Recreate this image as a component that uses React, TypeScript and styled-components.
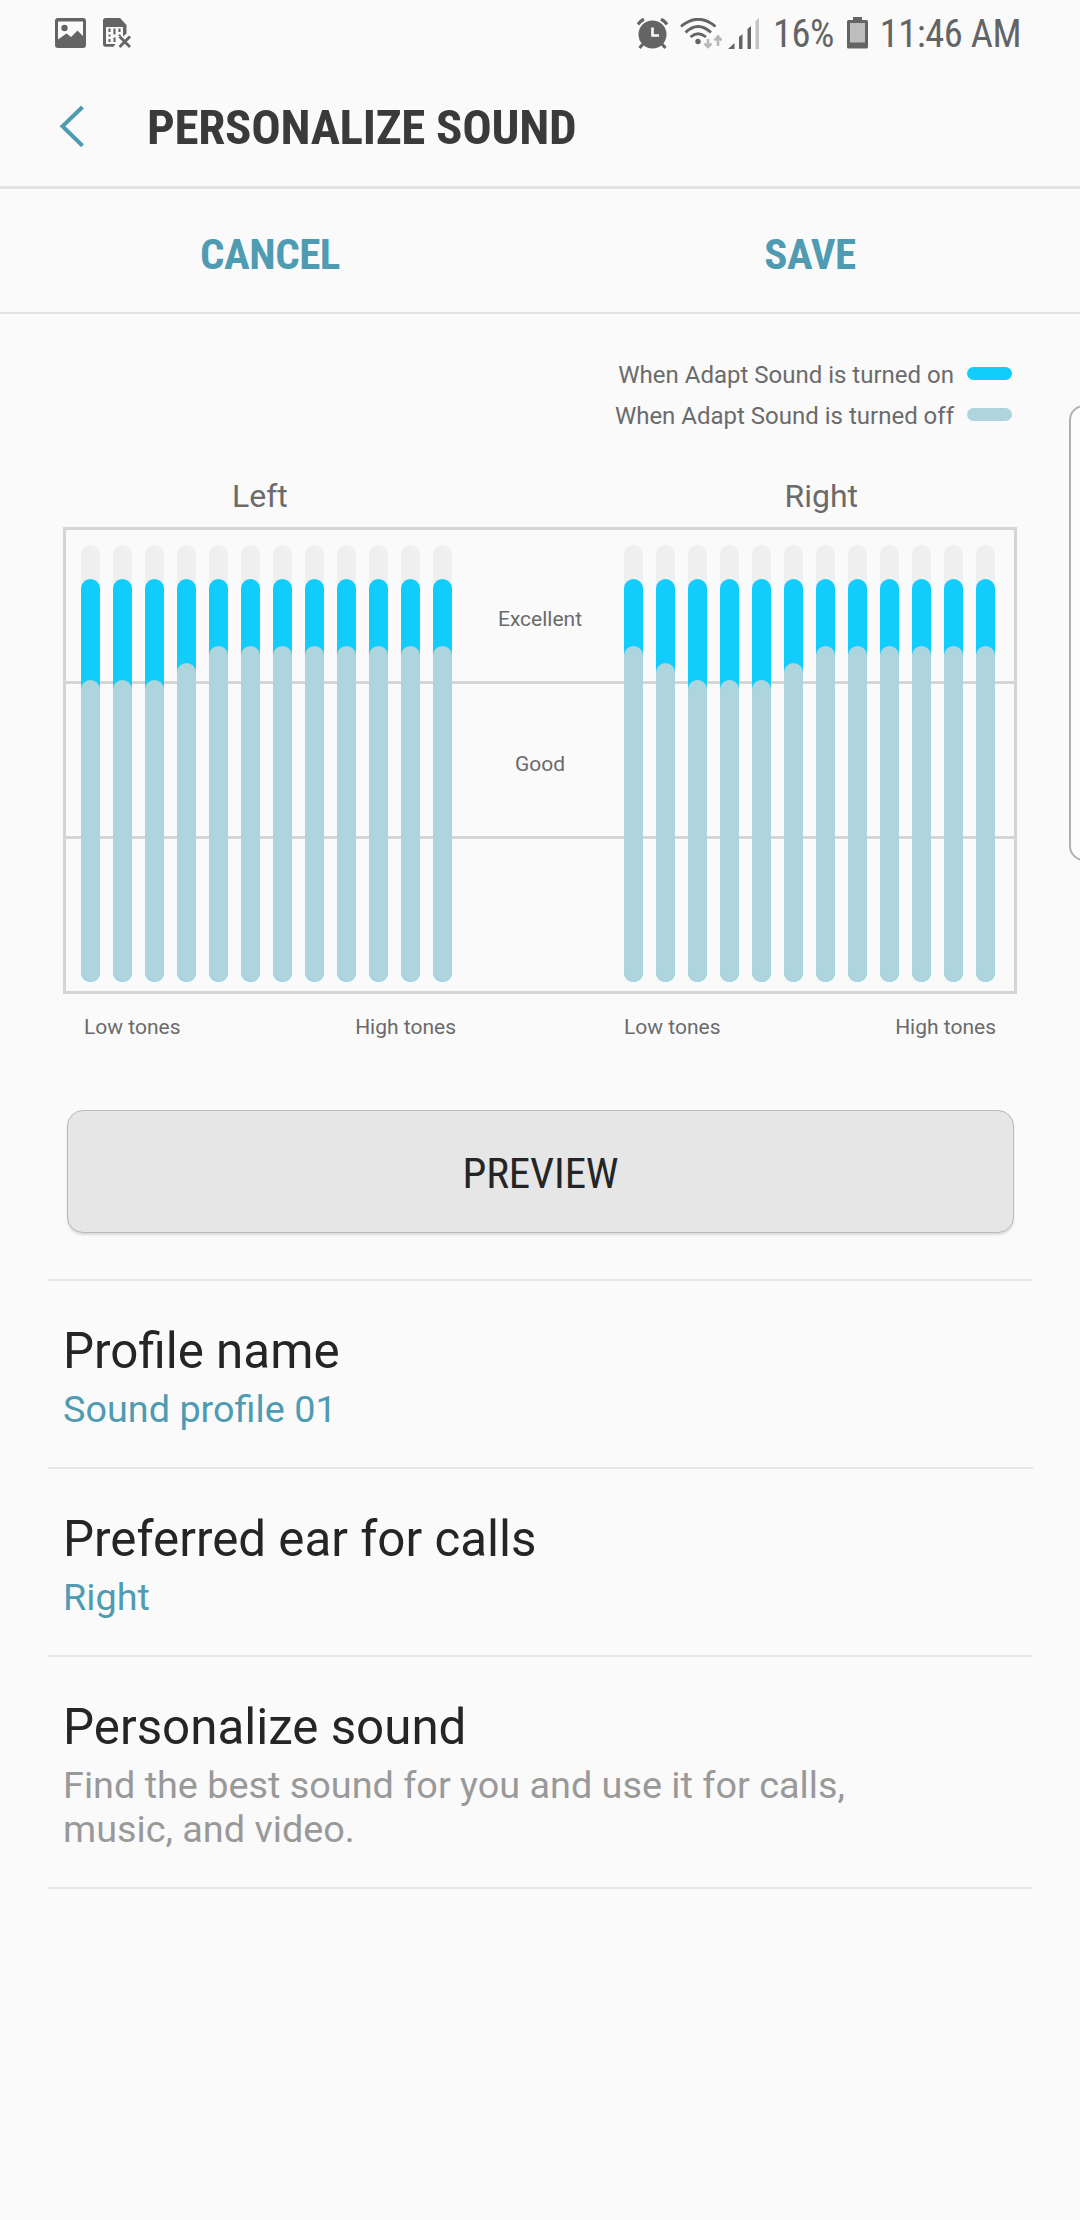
import React from "react";
import styled, { createGlobalStyle } from "styled-components";

const GlobalStyle = createGlobalStyle`
  * { box-sizing: border-box; }
  body { margin: 0; background: #fafafa; }
  button { border: 0; padding: 0; background: none; font: inherit; color: inherit; }
`;

const condensed = `
  font-family: "Roboto Condensed", Roboto, sans-serif;
  font-stretch: 75%;
`;

const Screen = styled.div`
  position: relative;
  width: 1080px;
  height: 2220px;
  overflow: hidden;
  background: #fafafa;
  font-family: Roboto, sans-serif;
`;

const StatusBar = styled.div`
  display: flex;
  align-items: center;
  justify-content: space-between;
  height: 66px;
  padding: 0 59px 0 55px;
  color: #646464;
`;

const StatusGroup = styled.div`
  display: flex;
  align-items: center;
`;

const StatusIcon = styled.svg<{ $gap: number }>`
  display: block;
  flex: none;
  margin-right: ${(p) => p.$gap}px;
`;

const StatusText = styled.span<{ $gap?: number }>`
  ${condensed}
  padding-top: 2px;
  font-size: 38.5px;
  line-height: 64px;
  letter-spacing: -0.5px;
  white-space: nowrap;
  margin-right: ${(p) => p.$gap ?? 0}px;
`;

const Header = styled.header`
  display: flex;
  align-items: center;
  height: 123px;
  padding-left: 58px;
  border-bottom: 3px solid #e3e3e3;
`;

const BackButton = styled.button`
  width: 89px;
  height: 46px;
`;

const BackArrow = styled.svg`
  display: block;
`;

const Title = styled.h1`
  ${condensed}
  margin: 0;
  padding-top: 4px;
  font-size: 49px;
  font-weight: 700;
  line-height: 60px;
  letter-spacing: -0.3px;
  color: #3a3a3a;
  white-space: nowrap;
`;

const ActionBar = styled.div`
  display: grid;
  grid-template-columns: 1fr 1fr;
  height: 125px;
  border-bottom: 2px solid #e3e3e3;
`;

const ActionButton = styled.button`
  ${condensed}
  padding-top: 6px;
  font-size: 43px;
  font-weight: 700;
  letter-spacing: -0.45px;
  color: #4f9bb2;
`;

const Legend = styled.div`
  display: flex;
  flex-direction: column;
  align-items: flex-end;
  padding: 40px 68px 0 0;
`;

const LegendItem = styled.div`
  display: flex;
  align-items: center;
  gap: 13px;
  height: 41px;
  font-size: 24px;
  color: #6b6b6b;
`;

const Swatch = styled.span<{ $color: string }>`
  width: 45px;
  height: 13px;
  margin-bottom: 2px;
  border-radius: 7px;
  background: ${(p) => p.$color};
`;

const EarLabels = styled.div`
  display: flex;
  justify-content: space-between;
  padding: 41px 222px 0 232px;
  font-size: 32px;
  line-height: 38px;
  color: #6b6b6b;
`;

const Chart = styled.div`
  display: grid;
  grid-template-columns: 371px 1fr 371px;
  width: 954px;
  height: 467px;
  margin: 12px 0 0 63px;
  padding: 0 19px 0 15px;
  border: 3px solid #d5d5d5;
  background: linear-gradient(#d5d5d5, #d5d5d5) 0 151px / 100% 3px no-repeat,
    linear-gradient(#d5d5d5, #d5d5d5) 0 306px / 100% 3px no-repeat;
`;

const Bars = styled.div`
  display: flex;
  justify-content: space-between;
  padding-top: 15px;
`;

const Track = styled.div`
  width: 19px;
  height: 437px;
  padding-top: 34px;
  border-radius: 9.5px;
  background: #efefef;
`;

const OnLevel = styled.div`
  display: flex;
  align-items: flex-end;
  height: 403px;
  border-radius: 9.5px;
  background: #10cdfb;
`;

const OffLevel = styled.div<{ $height: number }>`
  width: 19px;
  height: ${(p) => p.$height}px;
  border-radius: 9.5px;
  background: #aed5dd;
`;

const Zones = styled.div`
  display: grid;
  grid-template-rows: 152px 155px 1fr;
  justify-items: center;
  padding-left: 4px;
  font-size: 21px;
  line-height: 25px;
  color: #6b6b6b;
`;

const Zone = styled.span<{ $top: number }>`
  padding-top: ${(p) => p.$top}px;
`;

const ToneLabels = styled.div`
  display: flex;
  justify-content: space-between;
  padding: 21px 84px 0 84px;
  font-size: 21px;
  line-height: 25px;
  color: #6b6b6b;
`;

const ToneRange = styled.div`
  display: flex;
  justify-content: space-between;
  width: 372px;
`;

const PreviewButton = styled.button`
  ${condensed}
  display: block;
  width: 947px;
  height: 123px;
  margin: 70px 0 46px 67px;
  padding-top: 3px;
  border: 1.5px solid #b9b9b9;
  border-radius: 16px;
  background: #e6e6e6;
  box-shadow: 0 2px 2px #dcdcdc;
  font-size: 43px;
  letter-spacing: -0.15px;
  color: #252525;
`;

const Settings = styled.div`
  margin: 0 47px 0 48px;
  border-bottom: 2px solid #e6e6e6;
`;

const SettingRow = styled.div`
  padding: 41px 16px 36px 15px;
  border-top: 2px solid #e6e6e6;
`;

const SettingTitle = styled.div`
  font-size: 49.3px;
  line-height: 58px;
  color: #252525;
`;

const SettingValue = styled.div<{ $muted?: boolean }>`
  max-width: 830px;
  margin-top: 7px;
  font-size: 37.8px;
  line-height: 44px;
  color: ${(p) => (p.$muted ? "#999999" : "#4f9bb2")};
`;

const EdgeHandle = styled.div`
  position: absolute;
  top: 405px;
  left: 1069px;
  width: 30px;
  height: 456px;
  border: 2px solid #b0b0b0;
  border-radius: 16px;
  background: #fdfdfd;
`;

const leftEar = [302, 302, 302, 319, 336, 336, 336, 336, 336, 336, 336, 336];
const rightEar = [336, 319, 302, 302, 302, 319, 336, 336, 336, 336, 336, 336];

function EarBars({ levels }: { levels: number[] }) {
  return (
    <Bars>
      {levels.map((level, i) => (
        <Track key={i}>
          <OnLevel>
            <OffLevel $height={level} />
          </OnLevel>
        </Track>
      ))}
    </Bars>
  );
}

function Tones() {
  return (
    <ToneRange>
      <span>Low tones</span>
      <span>High tones</span>
    </ToneRange>
  );
}

function PictureIcon() {
  return (
    <StatusIcon $gap={17} width="31" height="30" viewBox="0 0 31 30">
      <path
        fill="#646464"
        fillRule="evenodd"
        d="M3 0H28a3 3 0 0 1 3 3V27a3 3 0 0 1-3 3H3a3 3 0 0 1-3-3V3a3 3 0 0 1 3-3ZM3 3.5V21.5L11.5 15.5 16 19 22.5 12.5 28 18V3.5Z"
      />
      <circle cx="9.5" cy="10" r="3.2" fill="#646464" />
    </StatusIcon>
  );
}

function SimErrorIcon() {
  return (
    <StatusIcon $gap={0} width="29" height="31" viewBox="0 0 29 31">
      <path
        fill="#646464"
        fillRule="evenodd"
        d="M2.5 0H17L23.5 7V15.5L20 18.5V9H3V26H12.5L10.5 28.8H2.5A2.5 2.5 0 0 1 0 26.5V2.5A2.5 2.5 0 0 1 2.5 0Z"
      />
      <path
        d="M6.5 10.5v3.5M6.5 16.5v2M6.5 21v3M11.5 10.5v6M11.5 19.5v4.5M16.5 10.5v3.5M16.5 16.5v1.5"
        stroke="#646464"
        strokeWidth="2.1"
      />
      <path d="M16.5 18.5 27 29M27 18.5 16.5 29" stroke="#646464" strokeWidth="2.8" />
    </StatusIcon>
  );
}

function AlarmIcon() {
  return (
    <StatusIcon $gap={12} width="31" height="31" viewBox="0 0 31 31">
      <g stroke="#646464" strokeWidth="3" fill="none">
        <path d="M1 6.5Q3 3 7 1.2M30 6.5Q28 3 24 1.2" strokeWidth="3.2" />
        <path d="M6 26 2.5 30M25 26 28.5 30" />
      </g>
      <circle cx="15.5" cy="16.5" r="14" fill="#646464" />
      <path d="M15.5 9.5V17.5H22" stroke="#fafafa" strokeWidth="2.6" fill="none" />
    </StatusIcon>
  );
}

function WifiIcon() {
  return (
    <StatusIcon $gap={6} width="42" height="31" viewBox="0 0 42 31">
      <g fill="none" stroke="#646464" strokeWidth="2.8">
        <path d="M1 8.5Q18-6 35.5 8.5" />
        <path d="M5.5 14.5Q18 2.5 31 14.5" />
        <path d="M10.5 19Q18 12.5 26 19" />
      </g>
      <circle cx="18" cy="23.5" r="2.7" fill="#646464" />
      <path
        d="M28 21V29M24.5 25.5 28 29 31.5 25.5M38 28V18.5M34.5 22.5 38 18.5 41.5 22.5"
        fill="none"
        stroke="#b8b8b8"
        strokeWidth="2.6"
      />
    </StatusIcon>
  );
}

function SignalIcon() {
  return (
    <StatusIcon $gap={13} width="32" height="31" viewBox="0 0 32 31">
      <path fill="#646464" d="M0 31 6.5 25V31ZM11 19 14.5 16V31H11ZM19.5 11 23 8V31H19.5Z" />
      <path fill="#c4c4c4" d="M27.5 3 31 0V31H27.5Z" />
    </StatusIcon>
  );
}

function BatteryIcon() {
  return (
    <StatusIcon $gap={12} width="21" height="32" viewBox="0 0 21 32">
      <path
        fill="#646464"
        d="M6 0H15V3H19.5A1.5 1.5 0 0 1 21 4.5V30A1.5 1.5 0 0 1 19.5 31.5H1.5A1.5 1.5 0 0 1 0 30V4.5A1.5 1.5 0 0 1 1.5 3H6Z"
      />
      <path fill="#bdbdbd" d="M3 6H18V25.5H3Z" />
    </StatusIcon>
  );
}

export default function App() {
  return (
    <Screen>
      <GlobalStyle />
      <StatusBar>
        <StatusGroup>
          <PictureIcon />
          <SimErrorIcon />
        </StatusGroup>
        <StatusGroup>
          <AlarmIcon />
          <WifiIcon />
          <SignalIcon />
          <StatusText $gap={13}>16%</StatusText>
          <BatteryIcon />
          <StatusText>11:46 AM</StatusText>
        </StatusGroup>
      </StatusBar>

      <Header>
        <BackButton aria-label="Back">
          <BackArrow width="30" height="46" viewBox="0 0 30 46">
            <path d="M24.5 4 4.5 23.3 24.5 42.7" fill="none" stroke="#4f9bb2" strokeWidth="4" />
          </BackArrow>
        </BackButton>
        <Title>PERSONALIZE SOUND</Title>
      </Header>

      <ActionBar>
        <ActionButton>CANCEL</ActionButton>
        <ActionButton>SAVE</ActionButton>
      </ActionBar>

      <Legend>
        <LegendItem>
          When Adapt Sound is turned on
          <Swatch $color="#10cdfb" />
        </LegendItem>
        <LegendItem>
          When Adapt Sound is turned off
          <Swatch $color="#aed5dd" />
        </LegendItem>
      </Legend>

      <EarLabels>
        <span>Left</span>
        <span>Right</span>
      </EarLabels>

      <Chart>
        <EarBars levels={leftEar} />
        <Zones>
          <Zone $top={77}>Excellent</Zone>
          <Zone $top={70}>Good</Zone>
        </Zones>
        <EarBars levels={rightEar} />
      </Chart>

      <ToneLabels>
        <Tones />
        <Tones />
      </ToneLabels>

      <PreviewButton>PREVIEW</PreviewButton>

      <Settings>
        <SettingRow>
          <SettingTitle>Profile name</SettingTitle>
          <SettingValue>Sound profile 01</SettingValue>
        </SettingRow>
        <SettingRow>
          <SettingTitle>Preferred ear for calls</SettingTitle>
          <SettingValue>Right</SettingValue>
        </SettingRow>
        <SettingRow>
          <SettingTitle>Personalize sound</SettingTitle>
          <SettingValue $muted>
            Find the best sound for you and use it for calls, music, and video.
          </SettingValue>
        </SettingRow>
      </Settings>

      <EdgeHandle />
    </Screen>
  );
}
